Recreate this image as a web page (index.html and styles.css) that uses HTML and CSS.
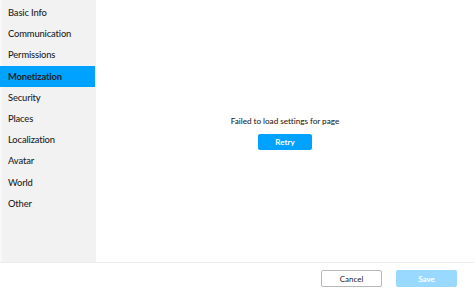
FILE: index.html
```html
<!DOCTYPE html>
<html>
<head>
<meta charset="utf-8">
<link rel="stylesheet" href="styles.css">
</head>
<body>
<div class="app">
  <div class="main">
    <nav class="sidebar">
      <div class="item">Basic Info</div>
      <div class="item">Communication</div>
      <div class="item">Permissions</div>
      <div class="item active">Monetization</div>
      <div class="item">Security</div>
      <div class="item">Places</div>
      <div class="item">Localization</div>
      <div class="item">Avatar</div>
      <div class="item">World</div>
      <div class="item">Other</div>
    </nav>
    <section class="content">
      <div class="message">Failed to load settings for page</div>
      <button class="btn primary retry">Retry</button>
    </section>
  </div>
  <footer class="footer">
    <button class="btn secondary">Cancel</button>
    <button class="btn disabled">Save</button>
  </footer>
</div>
</body>
</html>
```
FILE: styles.css
```css
* { box-sizing: border-box; }
html, body { margin: 0; padding: 0; background: #ffffff; }
body {
  font-family: "Lato", "Open Sans", sans-serif;
  color: #1f1f1f;
  width: 474px;
  height: 296px;
  overflow: hidden;
}
.app { display: flex; flex-direction: column; height: 296px; }
.main { display: flex; height: 263px; border-bottom: 1px solid #ececec; }
.sidebar {
  width: 96px;
  background: #f2f2f2;
  border-left: 2px solid #f8f8f8;
  padding-top: 2px;
  display: flex;
  flex-direction: column;
}
.item {
  height: 21.2px;
  line-height: 22px;
  padding-left: 6px;
  font-size: 9.4px;
  font-weight: 500;
  letter-spacing: -0.15px;
  white-space: nowrap;
}
.item.active {
  background: #00a2ff;
  font-weight: 700;
  margin-left: -2px;
  padding-left: 8px;
  margin-right: 1px;
}
.content {
  flex: 1;
  display: flex;
  flex-direction: column;
  align-items: center;
  justify-content: center;
  padding-top: 2px;
}
.message { font-size: 8.2px; line-height: 12px; margin-bottom: 7px; font-weight: 500; letter-spacing: -0.05px; }
.btn {
  font-family: inherit;
  font-size: 8px;
  border-radius: 2px;
  height: 17px;
  width: 61px;
  padding: 0;
  border: 1px solid transparent;
  cursor: pointer;
}
.primary { background: #00a2ff; color: #fff; font-weight: 700; }
.retry { width: 54px; height: 16px; }
.footer {
  flex: 1;
  display: flex;
  justify-content: flex-end;
  align-items: flex-start;
  padding: 7px 17px 0 0;
  gap: 14px;
}
.secondary { background: #fff; border-color: #b8b8b8; color: #1f1f1f; }
.disabled { background: #99d9ff; color: #fff; font-weight: 700; }
```
